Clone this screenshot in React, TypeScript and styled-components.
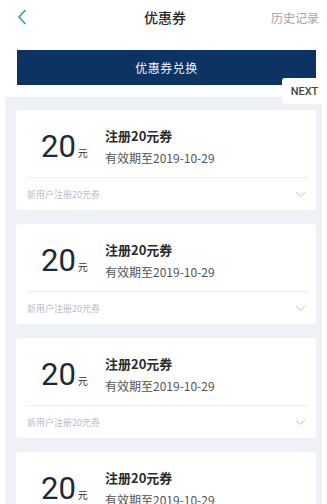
import React from 'react';
import styled, { createGlobalStyle } from 'styled-components';

const GlobalStyle = createGlobalStyle`
  html, body {
    margin: 0;
    padding: 0;
    background: #ffffff;
    font-family: "Noto Sans CJK SC", "Noto Sans", sans-serif;
    overflow: hidden;
  }
`;

const Page = styled.div`
  position: relative;
  width: 327px;
  height: 504px;
  overflow: hidden;
  background: #fff;
`;

const Header = styled.header`
  height: 34px;
  display: flex;
  align-items: center;
  justify-content: space-between;
  padding: 0 8px 0 17px;
`;

const BackButton = styled.button`
  width: 40px;
  height: 34px;
  border: none;
  background: none;
  padding: 0;
  display: flex;
  align-items: center;
  cursor: pointer;
`;

const Title = styled.h1`
  margin: 0;
  font-size: 14px;
  font-weight: 500;
  color: #2a2a2a;
  transform: translateX(1px);
`;

const HistoryLink = styled.a`
  font-size: 12px;
  color: #a3a3a3;
  width: 48px;
  text-align: right;
`;

const ExchangeButton = styled.button`
  display: block;
  margin: 16px 0 0 17px;
  width: 299px;
  height: 35px;
  border: none;
  background: #0c3462;
  color: #f2f5f9;
  font-family: inherit;
  font-size: 12px;
  letter-spacing: 0.5px;
`;

const NextBadge = styled.div`
  position: absolute;
  top: 78px;
  right: 0;
  width: 45px;
  height: 26px;
  background: #fff;
  border-radius: 3px 0 0 3px;
  display: flex;
  align-items: center;
  justify-content: center;
  font-family: Roboto, "Liberation Sans", sans-serif;
  font-size: 11px;
  font-weight: 500;
  color: #444;
  z-index: 2;
`;

const List = styled.div`
  margin: 12px 0 0 5px;
  width: 317px;
  padding: 13px 6px 0 11px;
  box-sizing: border-box;
  background: #eef2f6;
  display: flex;
  flex-direction: column;
  gap: 14px;
  min-height: 420px;
`;

const Card = styled.div`
  background: #fff;
  border-radius: 4px;
  height: 100px;
  padding: 0 8px 0 11px;
  box-sizing: border-box;
  display: flex;
  flex-direction: column;
`;

const CardTop = styled.div`
  height: 68px;
  display: flex;
  align-items: center;
  border-bottom: 1px solid #eceef1;
  box-sizing: border-box;
  padding-top: 6px;
`;

const Amount = styled.div`
  width: 78px;
  padding-left: 14px;
  box-sizing: border-box;
  display: flex;
  align-items: baseline;
  color: #1d2a3b;
`;

const AmountNumber = styled.span`
  font-family: Roboto, "Liberation Sans", sans-serif;
  font-size: 31px;
  line-height: 34px;
`;

const AmountUnit = styled.span`
  font-size: 10px;
  margin-left: 2px;
  color: #333;
`;

const Info = styled.div`
  display: flex;
  flex-direction: column;
  gap: 4px;
`;

const CouponName = styled.div`
  font-size: 13px;
  line-height: 18px;
  font-weight: 700;
  color: #2b2b2b;
`;

const Expire = styled.div`
  font-size: 12px;
  line-height: 18px;
  color: #555;
`;

const CardFooter = styled.div`
  flex: 1;
  display: flex;
  align-items: center;
  justify-content: space-between;
  padding-right: 2px;
`;

const Desc = styled.span`
  font-size: 9px;
  color: #b9bdc3;
`;

const Chevron = () => (
  <svg width="11" height="7" viewBox="0 0 11 7">
    <path d="M1 1l4.5 4.5L10 1" fill="none" stroke="#c4c8ce" strokeWidth="1" />
  </svg>
);

const coupons = [1, 2, 3, 4].map((id) => ({
  id,
  amount: '20',
  name: '注册20元券',
  expire: '有效期至2019-10-29',
  desc: '新用户注册20元券',
}));

export default function App() {
  return (
    <Page>
      <GlobalStyle />
      <Header>
        <BackButton aria-label="返回">
          <svg width="10" height="16" viewBox="0 0 10 16">
            <path d="M8.5 1L2 8l6.5 7" fill="none" stroke="#3c9f7c" strokeWidth="1.6" />
          </svg>
        </BackButton>
        <Title>优惠券</Title>
        <HistoryLink>历史记录</HistoryLink>
      </Header>

      <ExchangeButton>优惠券兑换</ExchangeButton>
      <NextBadge>NEXT</NextBadge>

      <List>
        {coupons.map((c) => (
          <Card key={c.id}>
            <CardTop>
              <Amount>
                <AmountNumber>{c.amount}</AmountNumber>
                <AmountUnit>元</AmountUnit>
              </Amount>
              <Info>
                <CouponName>{c.name}</CouponName>
                <Expire>{c.expire}</Expire>
              </Info>
            </CardTop>
            <CardFooter>
              <Desc>{c.desc}</Desc>
              <Chevron />
            </CardFooter>
          </Card>
        ))}
      </List>
    </Page>
  );
}
